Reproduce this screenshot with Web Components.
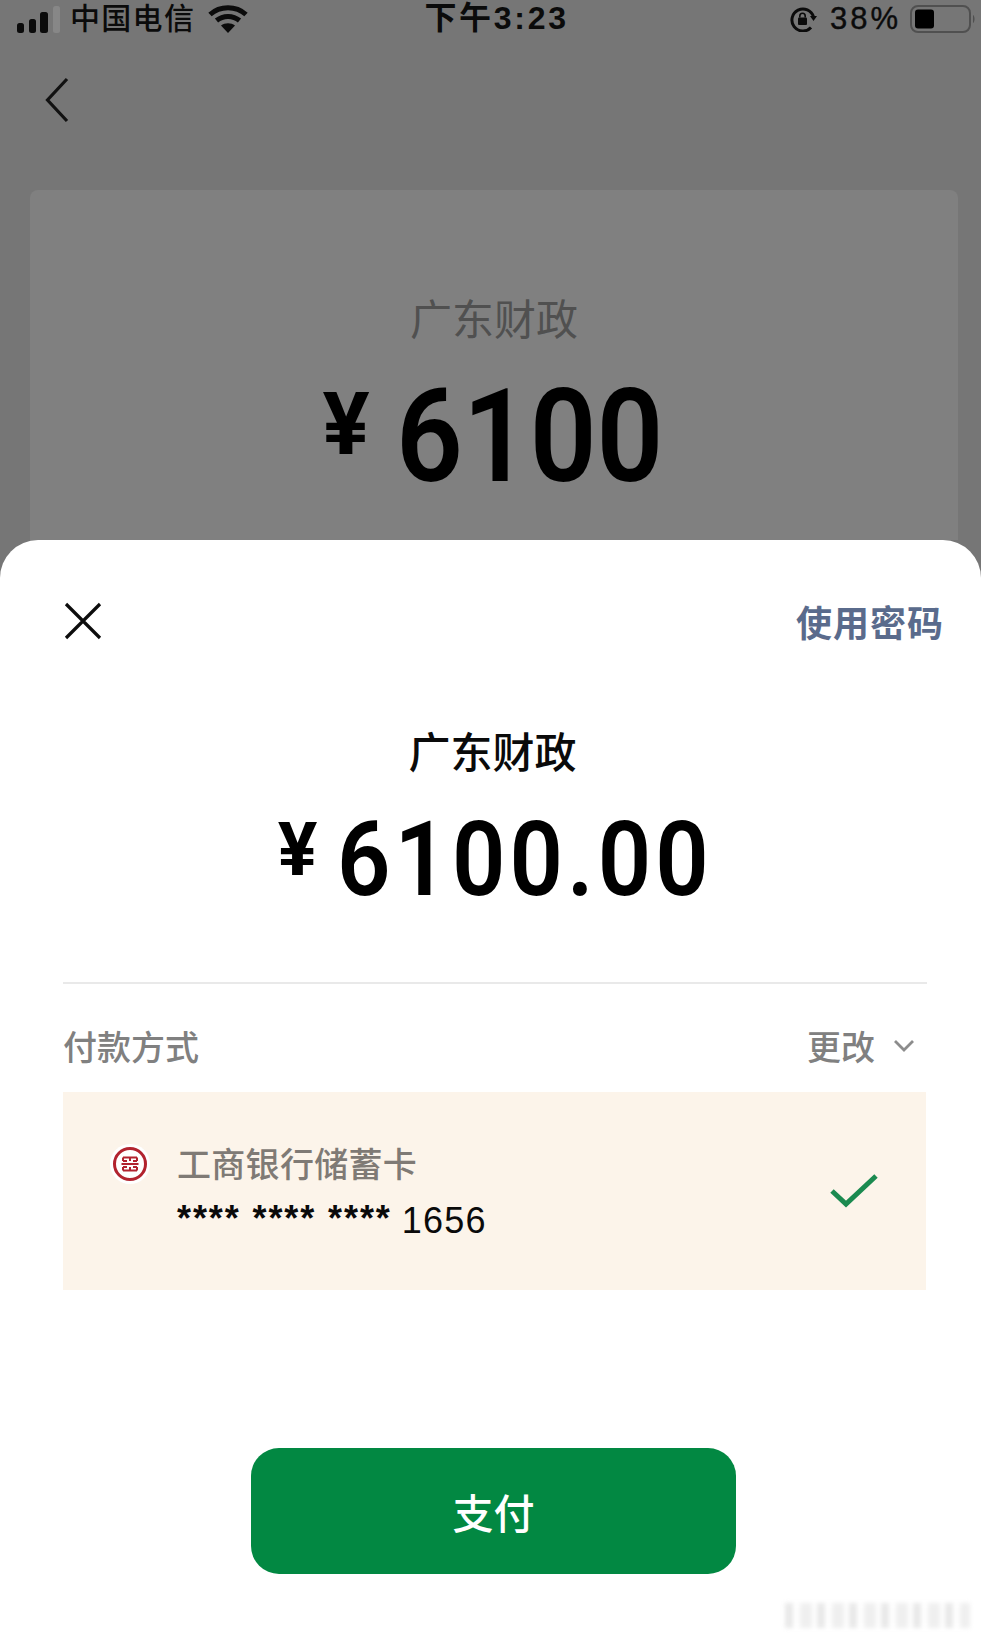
<!DOCTYPE html>
<html lang="zh">
<head>
<meta charset="utf-8">
<title>支付</title>
<style>
html, body { margin: 0; padding: 0; background: #767676; }
body { font-family: "Noto Sans CJK SC", "Noto Sans", sans-serif; }
</style>
</head>
<body>
<pay-screen>
  <status-bar slot="top" carrier="中国电信" time="下午3:23" battery="38%"></status-bar>
  <nav-bar slot="top"></nav-bar>
  <amount-card slot="top" payee="广东财政">
    <money-amount size="hero">6100</money-amount>
  </amount-card>
  <pay-sheet payee="广东财政" action="使用密码">
    <money-amount size="sheet">6100.00</money-amount>
    <method-row slot="method" label="付款方式" change="更改"></method-row>
    <card-option slot="method" bank="工商银行储蓄卡" mask="**** **** ****" last="1656"></card-option>
    <pay-button slot="button">支付</pay-button>
  </pay-sheet>
</pay-screen>

<script>
const CJK = `"Noto Sans CJK SC", "Noto Sans", sans-serif`;
const MIXED = `"Liberation Sans", "Noto Sans CJK SC", sans-serif`;

// Page frame, the sheet just follows the gray part in flow
class PayScreen extends HTMLElement {
   constructor() {
      super();
      this.attachShadow({ mode: "open" });
      this.shadowRoot.innerHTML = `
         <style>
         :host { display: flex; flex-direction: column; width: 981px; height: 1638px; overflow: hidden; background: #767676; position: relative; }
         .top { display: flex; flex-direction: column; height: 540px; flex: none; }
         </style>
         <div class="top"><slot name="top"></slot></div>
         <slot></slot>
      `;
   }
}

class StatusBar extends HTMLElement {
   constructor() {
      super();
      this.attachShadow({ mode: "open" });
      this.shadowRoot.innerHTML = `
         <style>
         :host { display: grid; grid-template-columns: 1fr auto 1fr; align-items: center; height: 37px; padding: 0 5px 0 17px; color: #0b0b0b; font: 500 30px/37px ${MIXED}; flex: none; }
         .left, .right { display: flex; align-items: center; }
         .right { justify-content: flex-end; }
         .carrier { margin-left: 10px; letter-spacing: 1.300px; }
         .wifi { margin-left: 13px; }
         .time { font-weight: 700; font-size: 32px; letter-spacing: 2.700px; }
         .pct { font-size: 31px; font-weight: 400; margin: 0 9px 0 13px; letter-spacing: 3px; -webkit-text-stroke: .4px #0b0b0b; }
         svg { display: block; flex: none; }
         </style>
         <div class="left">
            <svg width="43" height="28" viewBox="0 0 43 28">
               <rect x="0" y="18" width="7" height="10" rx="2.500" fill="#0b0b0b"/>
               <rect x="12" y="14" width="7" height="14" rx="2.500" fill="#0b0b0b"/>
               <rect x="23" y="7" width="8" height="21" rx="2.500" fill="#0b0b0b"/>
               <rect x="36" y="1" width="7" height="27" rx="2.500" fill="#8f8f8f" opacity=".7"/>
            </svg>
            <span class="carrier"></span>
            <svg class="wifi" width="40" height="30" viewBox="0 0 40 30">
               <path d="M2 10.500C12 1.500 28 1.500 38 10.500" fill="none" stroke="#0b0b0b" stroke-width="5"/>
               <path d="M8.500 16.500C15 11 25 11 31.500 16.500" fill="none" stroke="#0b0b0b" stroke-width="5"/>
               <path d="M20 29L13 21.500C17 18.500 23 18.500 27 21.500Z" fill="#0b0b0b"/>
            </svg>
         </div>
         <div class="time"></div>
         <div class="right">
            <svg width="28" height="26" viewBox="0 0 28 26">
               <path d="M22 21.500A11 11 0 1 1 24.500 11" fill="none" stroke="#0b0b0b" stroke-width="3"/>
               <path d="M24.500 15l-3.500-5h7z" fill="#0b0b0b"/>
               <rect x="9" y="11.500" width="9" height="7.500" rx="1" fill="#0b0b0b"/>
               <path d="M10.800 11.500V10a2.700 2.700 0 0 1 5.400 0v1.500" fill="none" stroke="#0b0b0b" stroke-width="1.600"/>
            </svg>
            <span class="pct"></span>
            <svg width="66" height="28" viewBox="0 0 66 28">
               <rect x="1" y="1" width="59" height="26" rx="7" fill="none" stroke="#505050" stroke-width="2"/>
               <rect x="5" y="4.500" width="19" height="19" rx="3" fill="#000"/>
               <path d="M63 10c2 1 2 7 0 8z" fill="#505050"/>
            </svg>
         </div>
      `;
   }
   connectedCallback() {
      this.shadowRoot.querySelector(".carrier").textContent = this.getAttribute("carrier");
      this.shadowRoot.querySelector(".time").textContent = this.getAttribute("time");
      this.shadowRoot.querySelector(".pct").textContent = this.getAttribute("battery");
   }
}

class NavBar extends HTMLElement {
   constructor() {
      super();
      this.attachShadow({ mode: "open" });
      this.shadowRoot.innerHTML = `
         <style>
         :host { display: flex; align-items: center; height: 153px; padding-left: 44px; padding-bottom: 28px; box-sizing: border-box; flex: none; }
         svg { display: block; }
         </style>
         <svg width="26" height="46" viewBox="0 0 26 46">
            <path d="M23 2L3.500 23 23 44" fill="none" stroke="#111" stroke-width="3.200"/>
         </svg>
      `;
   }
}

// Yuan amount, digits are squeezed a bit since there is no DIN here
class MoneyAmount extends HTMLElement {
   constructor() {
      super();
      this.attachShadow({ mode: "open" });
      this.shadowRoot.innerHTML = `
         <style>
         :host { display: flex; justify-content: center; align-items: flex-start; color: #000; font-family: Roboto, sans-serif; font-weight: 600; }
         :host([size="hero"]) { --num: 130px; --sym: 88px; --sym-lh: 104px; --w: 270px; --gap: 26px; --sx: .9; --ls: 0; height: 130px; }
         :host([size="sheet"]) { --num: 104px; --sym: 74px; --sym-lh: 84px; --w: 366px; --gap: 20px; --sx: .9; --ls: 4.500px; height: 104px; }
         .sym { font-size: var(--sym); line-height: var(--sym-lh); font-weight: 700; margin-right: var(--gap); }
         .num { display: block; width: var(--w); font-size: var(--num); line-height: 1; letter-spacing: var(--ls); white-space: nowrap; transform: scaleX(var(--sx)); transform-origin: left center; }
         </style>
         <span class="sym">¥</span><span class="num"><slot></slot></span>
      `;
   }
}

class AmountCard extends HTMLElement {
   constructor() {
      super();
      this.attachShadow({ mode: "open" });
      this.shadowRoot.innerHTML = `
         <style>
         :host { display: flex; flex-direction: column; align-items: center; margin: 0 23px 0 30px; height: 350px; padding-top: 97px; box-sizing: border-box; background: #808080; border-radius: 8px 8px 0 0; flex: none; }
         .payee { font: 400 42px/60px ${CJK}; color: #505050; margin-bottom: 25px; }
         </style>
         <div class="payee"></div>
         <slot></slot>
      `;
   }
   connectedCallback() {
      this.shadowRoot.querySelector(".payee").textContent = this.getAttribute("payee");
   }
}

class PaySheet extends HTMLElement {
   constructor() {
      super();
      this.attachShadow({ mode: "open" });
      this.shadowRoot.innerHTML = `
         <style>
         :host { display: flex; flex-direction: column; flex: 1; background: #fff; border-radius: 38px 38px 0 0; position: relative; }
         .head { display: flex; justify-content: space-between; align-items: center; height: 60px; margin-top: 51px; padding: 0 37px 0 64px; }
         .action { font: 700 36px/60px ${CJK}; color: #5a6b8c; letter-spacing: 1px; }
         svg { display: block; }
         .payee { text-align: center; font: 500 42px/60px ${CJK}; color: #0a0a0a; margin-top: 69px; padding-left: 4px; }
         .amount { margin-top: 28px; }
         hr { border: 0; height: 2px; background: #e9e9e9; margin: 70px 54px 0 63px; }
         .method { display: flex; flex-direction: column; padding: 0 55px 0 63px; margin-top: 37px; }
         .button { display: flex; justify-content: center; margin-top: 158px; }
         .smudge { position: absolute; left: 785px; top: 1063px; width: 185px; height: 25px; filter: blur(2px); opacity: .4;
            background: repeating-linear-gradient(90deg, #c8c8c8 0 8px, #fff 8px 15px, #d8d8d8 15px 27px, #fff 27px 32px); }
         </style>
         <div class="head">
            <svg width="38" height="38" viewBox="0 0 38 38">
               <path d="M2 2L36 36M36 2L2 36" fill="none" stroke="#0c0c0c" stroke-width="3.200"/>
            </svg>
            <span class="action"></span>
         </div>
         <div class="payee"></div>
         <div class="amount"><slot></slot></div>
         <hr>
         <div class="method"><slot name="method"></slot></div>
         <div class="button"><slot name="button"></slot></div>
         <div class="smudge"></div>
      `;
   }
   connectedCallback() {
      this.shadowRoot.querySelector(".action").textContent = this.getAttribute("action");
      this.shadowRoot.querySelector(".payee").textContent = this.getAttribute("payee");
   }
}

class MethodRow extends HTMLElement {
   constructor() {
      super();
      this.attachShadow({ mode: "open" });
      this.shadowRoot.innerHTML = `
         <style>
         :host { display: flex; justify-content: space-between; align-items: center; height: 50px; padding-right: 11px; color: #808080; font: 500 34px/50px ${CJK}; }
         .change { display: flex; align-items: center; gap: 18px; }
         svg { display: block; }
         </style>
         <span class="label"></span>
         <span class="change"><span class="text"></span>
            <svg width="22" height="14" viewBox="0 0 22 14"><path d="M2 2L11 11 20 2" fill="none" stroke="#8c8c8c" stroke-width="2.800"/></svg>
         </span>
      `;
   }
   connectedCallback() {
      this.shadowRoot.querySelector(".label").textContent = this.getAttribute("label");
      this.shadowRoot.querySelector(".text").textContent = this.getAttribute("change");
   }
}

class CardOption extends HTMLElement {
   constructor() {
      super();
      this.attachShadow({ mode: "open" });
      this.shadowRoot.innerHTML = `
         <style>
         :host { display: flex; align-items: flex-start; height: 198px; margin-top: 21px; padding: 46px 48px 0 47px; box-sizing: border-box; background: #fcf4ea; position: relative; }
         .logo { width: 40px; height: 40px; flex: none; border-radius: 50%; background: #fff; margin: 6px 27px 0 0; display: flex; align-items: center; justify-content: center; }
         .text { display: flex; flex-direction: column; flex: 1; }
         .bank { font: 500 34px/50px ${CJK}; color: #7f7a75; letter-spacing: .3px; }
         .num { display: flex; align-items: center; height: 50px; margin-top: 8px; color: #0a0a0a; font-family: "Liberation Sans", sans-serif; }
         .mask { font-size: 36px; font-weight: 700; letter-spacing: 1.900px; line-height: 50px; position: relative; top: -2px; margin-right: 10px; }
         .last { font-size: 36px; letter-spacing: 1.200px; }
         .check { align-self: center; margin-top: -46px; display: block; }
         </style>
         <div class="logo">
            <svg width="36" height="36" viewBox="0 0 36 36">
               <circle cx="18" cy="18" r="15.500" fill="none" stroke="#b2232f" stroke-width="3"/>
               <path d="M11 11.500H25M18 11.500V15M11 15H15M21 15H25M9.500 18H26.500M11 21H15M21 21H25M18 21V24.500M11 24.500H25M11 11.500V15M25 11.500V15M11 21V24.500M25 21V24.500" fill="none" stroke="#b2232f" stroke-width="2"/>
            </svg>
         </div>
         <div class="text">
            <div class="bank"></div>
            <div class="num"><span class="mask"></span><span class="last"></span></div>
         </div>
         <svg class="check" width="48" height="36" viewBox="0 0 48 36">
            <path d="M2 18L16 31 46 3" fill="none" stroke="#1b8a50" stroke-width="5"/>
         </svg>
      `;
   }
   connectedCallback() {
      this.shadowRoot.querySelector(".bank").textContent = this.getAttribute("bank");
      this.shadowRoot.querySelector(".mask").textContent = this.getAttribute("mask");
      this.shadowRoot.querySelector(".last").textContent = this.getAttribute("last");
   }
}

class PayButton extends HTMLElement {
   constructor() {
      super();
      this.attachShadow({ mode: "open" });
      this.shadowRoot.innerHTML = `
         <style>
         :host { display: flex; align-items: center; justify-content: center; width: 485px; height: 126px; margin-left: 6px; background: #028842; border-radius: 28px; color: #fff; font: 500 41px/1 ${CJK}; }
         </style>
         <slot></slot>
      `;
   }
}

customElements.define("pay-screen", PayScreen);
customElements.define("status-bar", StatusBar);
customElements.define("nav-bar", NavBar);
customElements.define("money-amount", MoneyAmount);
customElements.define("amount-card", AmountCard);
customElements.define("pay-sheet", PaySheet);
customElements.define("method-row", MethodRow);
customElements.define("card-option", CardOption);
customElements.define("pay-button", PayButton);
</script>
</body>
</html>
